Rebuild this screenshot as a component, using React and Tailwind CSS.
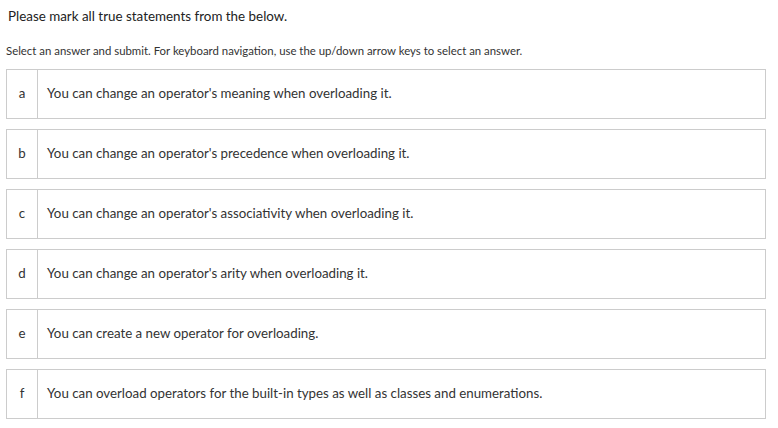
import React from "react";

const options = [
  { key: "a", text: "You can change an operator's meaning when overloading it." },
  { key: "b", text: "You can change an operator's precedence when overloading it." },
  { key: "c", text: "You can change an operator's associativity when overloading it." },
  { key: "d", text: "You can change an operator's arity when overloading it." },
  { key: "e", text: "You can create a new operator for overloading." },
  { key: "f", text: "You can overload operators for the built-in types as well as classes and enumerations." },
];

function OptionRow({ option }) {
  return (
    <div className="flex h-[50px] border border-[#cccccc] bg-white">
      <div className="w-[31px] shrink-0 flex items-center justify-center border-r border-[#cccccc] text-[13.3px] text-[#333333]">
        {option.key}
      </div>
      <div className="flex items-center pl-[9px] text-[13.3px] text-[#333333]">{option.text}</div>
    </div>
  );
}

export default function App() {
  return (
    <div
      className="w-[778px] h-[428px] bg-white overflow-hidden"
      style={{ fontFamily: "Lato, 'Liberation Sans', sans-serif" }}
    >
      <div className="pl-[8px] pt-[7px] text-[13.4px] leading-[18px] text-[#222222]">
        Please mark all true statements from the below.
      </div>
      <div className="pl-[6px] pt-[18px] text-[11.4px] leading-[15px] text-[#333333]">
        Select an answer and submit. For keyboard navigation, use the up/down arrow keys to select an answer.
      </div>
      <div className="flex flex-col gap-[10px] pl-[6px] pr-[12px] pt-[11px]">
        {options.map(o => (
          <OptionRow key={o.key} option={o} />
        ))}
      </div>
    </div>
  );
}
